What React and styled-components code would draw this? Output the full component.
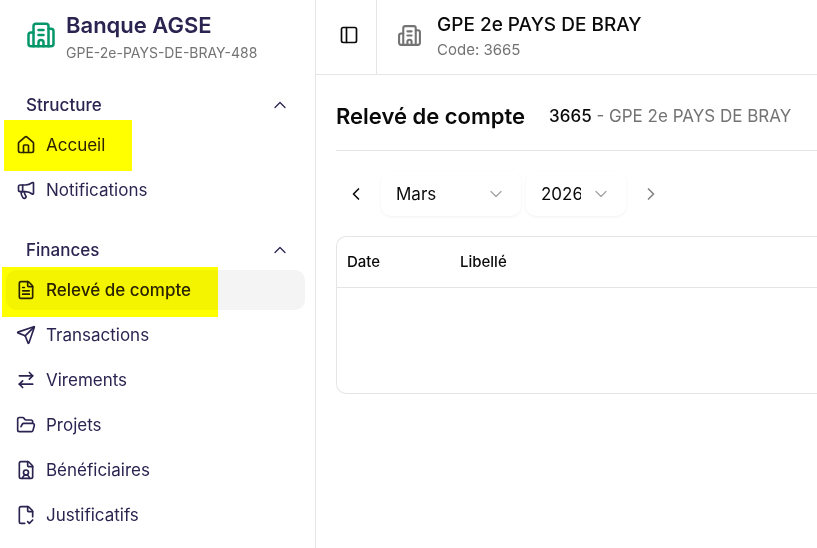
import React, { useState } from 'react'
import styled, { createGlobalStyle, css } from 'styled-components'
import {
  ArrowRightLeft,
  Building2,
  ChevronDown,
  ChevronLeft,
  ChevronRight,
  ChevronUp,
  FileCheckCorner,
  FileText,
  FileUser,
  FolderOpen,
  House,
  Megaphone,
  PanelLeft,
  Send,
} from 'lucide-react'

// mark = how far the highlighter runs past the label
const sections = [
  {
    title: 'Structure',
    items: [
      { label: 'Accueil', icon: House, mark: '-13px -27px -14px -12px' },
      { label: 'Notifications', icon: Megaphone },
    ],
  },
  {
    title: 'Finances',
    items: [
      { label: 'Relevé de compte', icon: FileText, active: true, mark: '-11px -27px -15px -14px' },
      { label: 'Transactions', icon: Send },
      { label: 'Virements', icon: ArrowRightLeft },
      { label: 'Projets', icon: FolderOpen },
      { label: 'Bénéficiaires', icon: FileUser },
      { label: 'Justificatifs', icon: FileCheckCorner },
    ],
  },
]

const months = [
  'Janvier', 'Février', 'Mars', 'Avril', 'Mai', 'Juin', 'Juillet',
  'Août', 'Septembre', 'Octobre', 'Novembre', 'Décembre',
]
const years = ['2024', '2025', '2026']

const App = () => {
  const [month, setMonth] = useState('Mars')
  const [year, setYear] = useState('2026')
  const [closed, setClosed] = useState({})

  const toggle = (title) => setClosed({ ...closed, [title]: !closed[title] })

  return (
    <>
      <GlobalStyle />
      <Page>
        <Sidebar>
          <Brand>
            <Building2 size={30} color="#059669" />
            <div>
              <BrandName>Banque AGSE</BrandName>
              <BrandCode>GPE-2e-PAYS-DE-BRAY-488</BrandCode>
            </div>
          </Brand>

          {sections.map((section) => (
            <Section key={section.title}>
              <SectionTitle type="button" onClick={() => toggle(section.title)}>
                {section.title}
                <ChevronUp size={20} strokeWidth={1.5} />
              </SectionTitle>
              {!closed[section.title] && (
                <Menu>
                  {section.items.map(({ label, icon: Icon, active, mark }) => (
                    <li key={label}>
                      <MenuLink href="#" $active={active}>
                        <MenuLabel $mark={mark}>
                          <Icon size={20} />
                          {label}
                        </MenuLabel>
                      </MenuLink>
                    </li>
                  ))}
                </Menu>
              )}
            </Section>
          ))}
        </Sidebar>

        <Main>
          <TopBar>
            <PanelButton type="button" aria-label="Réduire le menu">
              <PanelLeft size={20} />
            </PanelButton>
            <Account>
              <Building2 size={25} color="#737373" />
              <div>
                <AccountName>GPE 2e PAYS DE BRAY</AccountName>
                <AccountCode>Code: 3665</AccountCode>
              </div>
            </Account>
          </TopBar>

          <Content>
            <Heading>
              <Title>Relevé de compte</Title>
              <Subtitle>
                <strong>3665</strong> - GPE 2e PAYS DE BRAY
              </Subtitle>
            </Heading>

            <Period>
              <ArrowButton type="button" aria-label="Mois précédent">
                <ChevronLeft size={20} />
              </ArrowButton>
              <SelectBox $width={140}>
                <select aria-label="Mois" value={month} onChange={(e) => setMonth(e.target.value)}>
                  {months.map((m) => <option key={m}>{m}</option>)}
                </select>
                <ChevronDown size={20} strokeWidth={1.5} />
              </SelectBox>
              <SelectBox $width={100}>
                <select aria-label="Année" value={year} onChange={(e) => setYear(e.target.value)}>
                  {years.map((y) => <option key={y}>{y}</option>)}
                </select>
                <ChevronDown size={20} strokeWidth={1.5} />
              </SelectBox>
              <ArrowButton type="button" aria-label="Mois suivant" disabled>
                <ChevronRight size={20} />
              </ArrowButton>
            </Period>

            <TableFrame>
              <Table>
                <thead>
                  <tr>
                    <DateHead scope="col">Date</DateHead>
                    <th scope="col">Libellé</th>
                  </tr>
                </thead>
                <tbody>
                  <tr>
                    <EmptyCell colSpan={2} />
                  </tr>
                </tbody>
              </Table>
            </TableFrame>
          </Content>
        </Main>
      </Page>
    </>
  )
}

export default App

const GlobalStyle = createGlobalStyle`
  * {
    box-sizing: border-box;
  }
  body {
    margin: 0;
    background: #fff;
    color: #0a0a0a;
    font-family: Inter, "Liberation Sans", sans-serif;
    font-size: 17px;
    line-height: 24px;
  }
  button, select {
    font: inherit;
    color: inherit;
    background: none;
    border: 0;
    padding: 0;
    cursor: pointer;
  }
  svg {
    flex-shrink: 0;
  }
`

const Page = styled.div`
  display: flex;
  min-height: 100vh;
  overflow: hidden;
`

const Sidebar = styled.aside`
  flex: 0 0 316px;
  border-right: 1px solid #e5e5e5;
  padding: 7px 10px 0 6px;
  color: #2b2350;
`

const Brand = styled.div`
  display: flex;
  align-items: center;
  gap: 10px;
  padding-left: 20px;
  margin-bottom: 22px;
`

const BrandName = styled.div`
  font-size: 22px;
  font-weight: 600;
  line-height: 36px;
`

const BrandCode = styled.div`
  font-size: 14px;
  line-height: 20px;
  color: #737373;
`

const Section = styled.section`
  margin-bottom: 20px;
`

const SectionTitle = styled.button`
  display: flex;
  align-items: center;
  justify-content: space-between;
  width: 100%;
  height: 40px;
  padding: 0 15px 0 20px;
  font-weight: 500;
`

const Menu = styled.ul`
  list-style: none;
  margin: 0;
  padding: 0;
  display: flex;
  flex-direction: column;
  gap: 5px;
`

const MenuLink = styled.a`
  display: flex;
  align-items: center;
  height: 40px;
  padding: 0 10px;
  border-radius: 10px;
  color: inherit;
  text-decoration: none;
  background: ${(p) => (p.$active ? '#f4f4f4' : 'transparent')};
  font-weight: ${(p) => (p.$active ? 500 : 400)};
`

const marker = css`
  &::after {
    content: '';
    position: absolute;
    inset: ${(p) => p.$mark};
    background: #ff0;
    mix-blend-mode: multiply;
    pointer-events: none;
  }
`

const MenuLabel = styled.span`
  position: relative;
  display: flex;
  align-items: center;
  gap: 10px;
  ${(p) => p.$mark && marker}
`

const Main = styled.main`
  flex: 1;
  min-width: 0;
`

const TopBar = styled.header`
  display: flex;
  height: 75px;
  border-bottom: 1px solid #e5e5e5;
`

const PanelButton = styled.button`
  display: flex;
  align-items: center;
  justify-content: center;
  width: 61px;
  padding: 0 0 4px 5px;
  border-right: 1px solid #e5e5e5;
`

const Account = styled.div`
  display: flex;
  align-items: center;
  gap: 15px;
  padding: 0 20px 4px;
`

const AccountName = styled.div`
  font-size: 19px;
  font-weight: 500;
  line-height: 30px;
`

const AccountCode = styled.div`
  font-size: 15px;
  line-height: 20px;
  color: #737373;
`

const Content = styled.div`
  padding: 20px 0 20px 20px;
`

const Heading = styled.div`
  display: flex;
  align-items: center;
  gap: 24px;
  padding-bottom: 14px;
  margin-bottom: 20px;
  height: 56px;
  border-bottom: 1px solid #e5e5e5;
  white-space: nowrap;
`

const Title = styled.h1`
  margin: 0;
  font-size: 22px;
  font-weight: 600;
`

const Subtitle = styled.div`
  color: #737373;

  strong {
    font-weight: 500;
    color: #0a0a0a;
  }
`

const Period = styled.div`
  display: flex;
  align-items: center;
  gap: 5px;
  margin-bottom: 20px;
`

const ArrowButton = styled.button`
  display: flex;
  align-items: center;
  justify-content: center;
  width: 40px;
  height: 40px;

  &:disabled {
    opacity: 0.5;
    color: inherit;
  }
`

const SelectBox = styled.div`
  display: flex;
  align-items: center;
  gap: 10px;
  width: ${(p) => p.$width}px;
  height: 45px;
  padding: 0 15px;
  border-radius: 10px;
  box-shadow: 0 1px 3px rgba(0, 0, 0, 0.06);

  select {
    flex: 1;
    min-width: 0;
    height: 100%;
    appearance: none;
    outline: none;
    overflow: hidden;
    text-overflow: clip;
  }
  svg {
    color: #a3a3a3;
    pointer-events: none;
  }
`

const TableFrame = styled.div`
  border: 1px solid #e5e5e5;
  border-right: 0;
  border-radius: 10px 0 0 10px;
`

const Table = styled.table`
  width: 100%;
  border-collapse: collapse;

  th {
    height: 50px;
    padding: 0 10px;
    font-size: 15px;
    font-weight: 500;
    text-align: left;
    border-bottom: 1px solid #e5e5e5;
  }
`

const DateHead = styled.th`
  width: 113px;
`

const EmptyCell = styled.td`
  height: 106px;
`
